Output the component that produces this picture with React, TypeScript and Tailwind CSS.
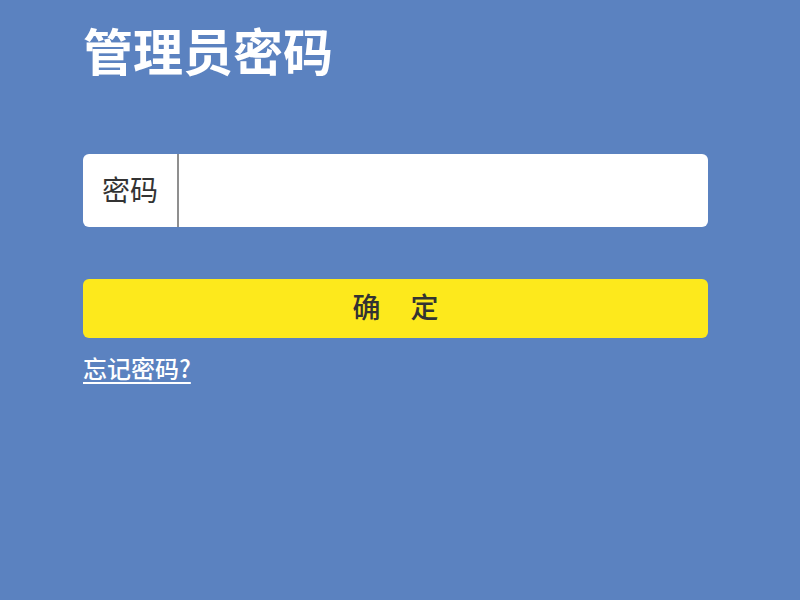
import React, { useState } from 'react';

const font = { fontFamily: '"Noto Sans CJK SC", "Noto Sans", sans-serif' };

export default function App() {
    const [password, setPassword] = useState('');

    return (
        <div className="min-h-[600px] w-[800px] bg-[#5b82c0]" style={font}>
            <div className="flex w-[708px] flex-col pl-[83px] pt-[24px]">
                <h1 className="text-[50px] font-bold leading-none text-white">管理员密码</h1>

                {/* password field */}
                <div className="mt-[80px] flex h-[73px] overflow-hidden rounded-[6px] bg-white">
                    <label className="flex w-[96px] items-center justify-center border-r-2 border-[#8f8f8f] pb-[4px] text-[28px] text-[#333]">
                        密码
                    </label>
                    <input
                        type="password"
                        value={password}
                        onChange={(e) => setPassword(e.target.value)}
                        className="flex-1 px-4 text-[24px] outline-none"
                    />
                </div>

                <button className="mt-[52px] h-[59px] rounded-[6px] bg-[#fde91c] pb-[6px] text-[28px] font-medium tracking-[30px] text-[#333]">
                    <span className="mr-[-30px]">确定</span>
                </button>

                <a href="#" className="mt-[14px] self-start text-[24px] font-medium leading-[32px] text-white underline underline-offset-4">
                    忘记密码?
                </a>
            </div>
        </div>
    );
}
